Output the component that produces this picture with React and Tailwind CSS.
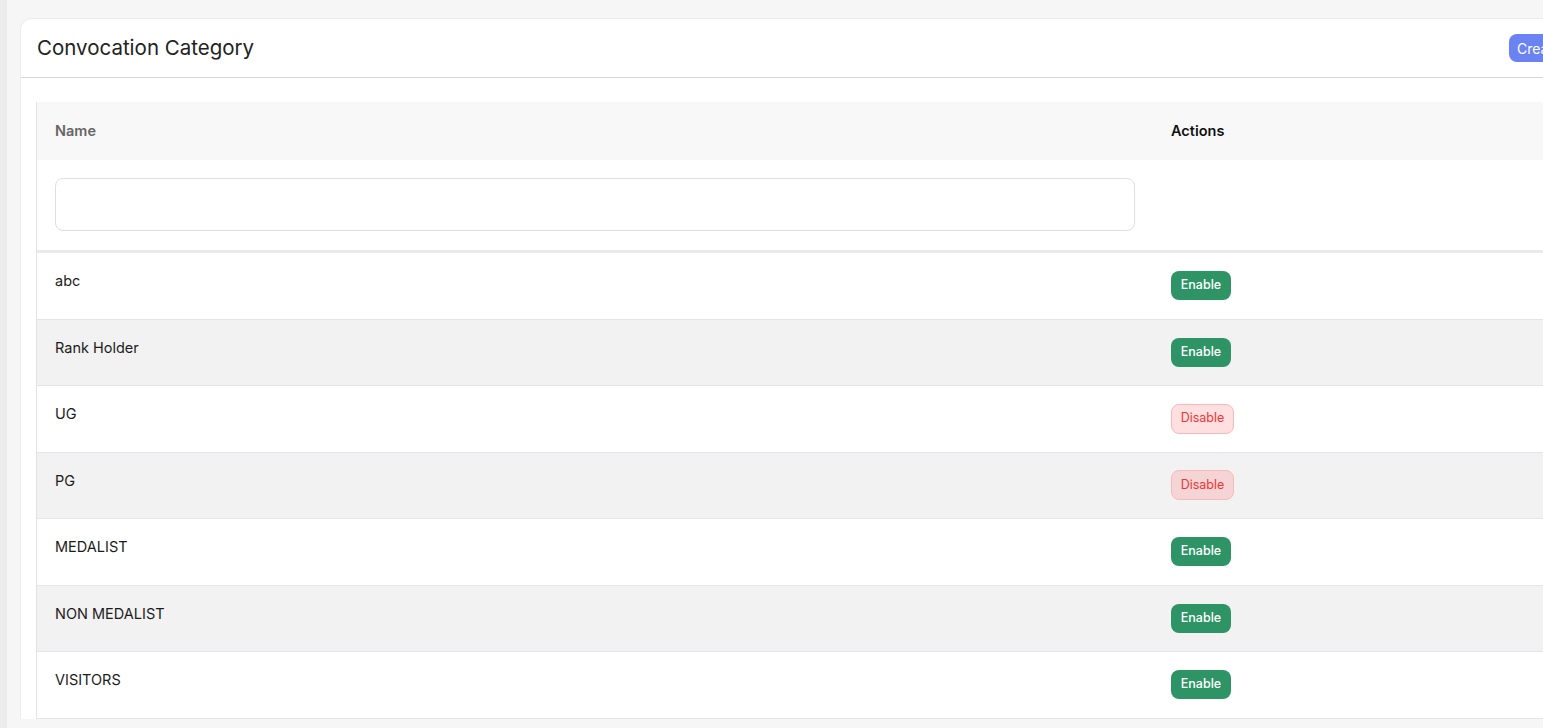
import React from 'react';

const rows = [
  { name: 'abc', enabled: true },
  { name: 'Rank Holder', enabled: true },
  { name: 'UG', enabled: false },
  { name: 'PG', enabled: false },
  { name: 'MEDALIST', enabled: true },
  { name: 'NON MEDALIST', enabled: true },
  { name: 'VISITORS', enabled: true },
];

const StatusButton = ({ enabled }) =>
  enabled ? (
    <button className="h-[29px] w-[60px] rounded-lg bg-[#2e9466] text-[12.5px] font-medium text-white">
      Enable
    </button>
  ) : (
    <button className="h-[30px] w-[63px] rounded-lg border border-[#fbb8b8] bg-[rgba(255,40,40,0.15)] text-[12.5px] text-[#f03737]">
      Disable
    </button>
  );

export default function App() {
  return (
    <div
      className="flex h-[728px] w-[1543px] overflow-hidden bg-[#f6f6f6]"
      style={{ fontFamily: 'Inter, "Noto Sans", sans-serif' }}
    >
      <div className="w-[7px] shrink-0 bg-[#ececec]" />
      <div className="pl-[13px] pt-[18px]">
        <div className="w-[1600px] rounded-tl-xl border-l border-t border-[#ececec] bg-white">
          {/* Header */}
          <div className="flex h-[59px] items-center justify-between border-b border-[#d6d6d6] pl-[16px]">
            <h1 className="text-[20.5px] text-[#222]">Convocation Category</h1>
            <button className="mr-[21px] h-[28px] w-[90px] rounded-lg bg-[#6b82f2] pl-[8px] text-left text-[14px] text-white">
              Create
            </button>
          </div>

          {/* Table */}
          <div className="pl-[15px] pt-[24px]">
            <div className="border-l border-[#e2e2e8]">
              <div className="flex h-[58px] items-center bg-[#f8f8f8] text-[14.5px] font-semibold">
                <div className="w-[1116px] pl-[18px] text-[#666]">Name</div>
                <div className="pl-[18px] text-[#111]">Actions</div>
              </div>
              <div className="flex h-[93px] border-b-[3px] border-[#ebebef] pt-[18px]">
                <div className="w-[1116px] pl-[18px]">
                  <input className="h-[53px] w-[1080px] rounded-lg border border-[#dedee6] bg-white outline-none" />
                </div>
              </div>
              {rows.map((r, i) => (
                <div
                  key={r.name}
                  className={`flex h-[66.5px] border-b border-[#e4e4ea] ${i % 2 === 1 ? 'bg-[#f2f2f2]' : 'bg-white'}`}
                >
                  <div className="w-[1116px] pl-[18px] pt-[17px] text-[14.5px] text-[#1c1c1c]">{r.name}</div>
                  <div className="flex items-center pl-[18px]">
                    <StatusButton enabled={r.enabled} />
                  </div>
                </div>
              ))}
            </div>
          </div>
        </div>
      </div>
    </div>
  );
}
